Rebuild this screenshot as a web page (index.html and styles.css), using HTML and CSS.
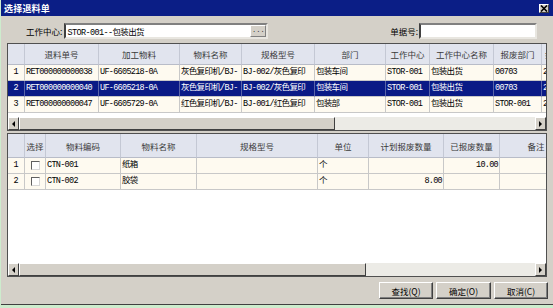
FILE: index.html
```html
<!DOCTYPE html>
<html lang="zh-CN">
<head>
    <meta charset="UTF-8">
    <title>选择退料单</title>
    <link rel="stylesheet" href="styles.css">
</head>
<body>
<div class="window">
    <div class="titlebar">
        <span class="title">选择退料单</span>
        <span class="close-btn">
            <svg width="8" height="7" viewBox="0 0 8 7"><path d="M1 0.5 L7 6.5 M7 0.5 L1 6.5" stroke="#000" stroke-width="1.6"/></svg>
        </span>
    </div>

    <div class="search">
        <label class="lbl">工作中心:</label>
        <div class="field field-wc">
            <span class="field-text">STOR-001--包装出货</span>
            <span class="dots">...</span>
        </div>
        <label class="lbl lbl-no">单据号:</label>
        <div class="field field-no"></div>
    </div>

    <!-- 退料单列表 -->
    <div class="grid grid-top">
        <div class="grid-body">
            <table class="data data-top">
                <thead>
                    <tr>
                        <th class="w-no"></th>
                        <th class="w-73">退料单号</th>
                        <th class="w-80">加工物料</th>
                        <th class="w-61">物料名称</th>
                        <th class="w-72">规格型号</th>
                        <th class="w-70">部门</th>
                        <th class="w-43">工作中心</th>
                        <th class="w-63">工作中心名称</th>
                        <th class="w-47">报废部门</th>
                        <th class="w-30 left">报</th>
                    </tr>
                </thead>
                <tbody>
                    <tr>
                        <td class="no">1</td>
                        <td>RET000000000038</td>
                        <td>UF-6605218-0A</td>
                        <td>灰色复印机/BJ-</td>
                        <td>BJ-002/灰色复印</td>
                        <td>包装车间</td>
                        <td>STOR-001</td>
                        <td>包装出货</td>
                        <td>00703</td>
                        <td>2</td>
                    </tr>
                    <tr class="selected">
                        <td class="no">2</td>
                        <td>RET000000000040</td>
                        <td>UF-6605218-0A</td>
                        <td>灰色复印机/BJ-</td>
                        <td>BJ-002/灰色复印</td>
                        <td>包装车间</td>
                        <td>STOR-001</td>
                        <td>包装出货</td>
                        <td>00703</td>
                        <td>2</td>
                    </tr>
                    <tr>
                        <td class="no">3</td>
                        <td>RET000000000047</td>
                        <td>UF-6605729-0A</td>
                        <td>红色复印机/BJ-</td>
                        <td>BJ-001/红色复印</td>
                        <td>包装部</td>
                        <td>STOR-001</td>
                        <td>包装出货</td>
                        <td>STOR-001</td>
                        <td>2</td>
                    </tr>
                </tbody>
            </table>
        </div>
        <div class="hscroll">
            <span class="sb-btn"><span class="arrow-left"></span></span>
            <span class="sb-thumb thumb-top"></span>
            <span class="sb-track"></span>
            <span class="sb-btn"><span class="arrow-right"></span></span>
        </div>
    </div>

    <!-- 物料明细 -->
    <div class="grid grid-bottom">
        <div class="grid-body">
            <table class="data data-bottom">
                <thead>
                    <tr>
                        <th class="w-no"></th>
                        <th class="w-20">选择</th>
                        <th class="w-74">物料编码</th>
                        <th class="w-75">物料名称</th>
                        <th class="w-120">规格型号</th>
                        <th class="w-50">单位</th>
                        <th class="w-74">计划报废数量</th>
                        <th class="w-55">已报废数量</th>
                        <th class="w-72">备注</th>
                    </tr>
                </thead>
                <tbody>
                    <tr>
                        <td class="no">1</td>
                        <td class="chk"><span class="checkbox"></span></td>
                        <td>CTN-001</td>
                        <td>纸箱</td>
                        <td></td>
                        <td>个</td>
                        <td class="num"></td>
                        <td class="num">10.00</td>
                        <td></td>
                    </tr>
                    <tr>
                        <td class="no">2</td>
                        <td class="chk"><span class="checkbox"></span></td>
                        <td>CTN-002</td>
                        <td>胶袋</td>
                        <td></td>
                        <td>个</td>
                        <td class="num">8.00</td>
                        <td class="num"></td>
                        <td></td>
                    </tr>
                </tbody>
            </table>
        </div>
        <div class="hscroll">
            <span class="sb-btn"><span class="arrow-left"></span></span>
            <span class="sb-thumb thumb-bottom"></span>
            <span class="sb-track"></span>
            <span class="sb-btn"><span class="arrow-right"></span></span>
        </div>
    </div>

    <div class="actions">
        <button class="btn btn-find">查找(Q)</button>
        <button class="btn btn-ok">确定(O)</button>
        <button class="btn btn-cancel">取消(C)</button>
    </div>
</div>
</body>
</html>
```

FILE: styles.css
```css
body {
    margin: 0;
    background: #cdeccd;
    font-family: "Liberation Mono", "Noto Sans CJK SC", monospace;
    font-size: 9px;
    color: #000;
}
.window {
    width: 552px;
    height: 304px;
    margin-left: 1px;
    background: #d4d0c8;
    border-bottom: 1px solid #404040;
    overflow: hidden;
}

/* title bar */
.titlebar {
    height: 16px;
    background: #0b1e86;
    display: flex;
    align-items: center;
    justify-content: space-between;
    padding: 0 4px 0 3px;
}
.title {
    color: #fff;
    font-family: "Noto Sans CJK SC", sans-serif;
    font-weight: bold;
    font-size: 9px;
    letter-spacing: 0.2px;
}
.close-btn {
    width: 8px;
    height: 7px;
    background: #d4d0c8;
    border: 1px solid;
    border-color: #fff #404040 #404040 #fff;
    display: flex;
    align-items: center;
    justify-content: center;
}

/* search row */
.search {
    display: flex;
    align-items: center;
    height: 16px;
    margin-top: 7px;
    padding-left: 25px;
}
.lbl {
    font-family: "Noto Sans CJK SC", sans-serif;
    font-size: 8.5px;
    margin-right: 2px;
}
.lbl-no {
    margin-left: auto;
    margin-right: 1px;
}
.field {
    height: 12px;
    background: #fff;
    border: 2px solid;
    border-color: #808080 #e8e6e0 #e8e6e0 #404040;
    display: flex;
    align-items: center;
}
.field-wc {
    width: 200px;
}
.field-no {
    width: 114px;
    margin-right: 16px;
}
.field-text {
    flex: 1;
    padding-left: 1px;
    font-size: 8.5px;
    letter-spacing: -0.6px;
}
.dots {
    width: 14px;
    height: 10px;
    background: #d4d0c8;
    border: 1px solid;
    border-color: #fff #808080 #808080 #fff;
    font-size: 7px;
    line-height: 8px;
    text-align: center;
    color: #333;
}

/* grids */
.grid {
    width: 538px;
    margin-left: 6px;
    border: 1px solid #505050;
    background: #fff;
    display: flex;
    flex-direction: column;
}
.grid-top {
    margin-top: 4px;
    height: 86px;
}
.grid-bottom {
    margin-top: 2px;
    height: 142px;
}
.grid-body {
    flex: 1;
    overflow: hidden;
}
.data {
    table-layout: fixed;
    border-collapse: separate;
    border-spacing: 0;
}
.data-top {
    width: 555px;
}
.data-bottom {
    width: 556px;
}
.data th {
    background: #e1e4ee;
    color: #3a3a3a;
    font-family: "Noto Sans CJK SC", sans-serif;
    font-weight: normal;
    font-size: 8.5px;
    border-right: 1px solid #c4c8d4;
    border-bottom: 1px solid #b8bcc8;
    padding: 0;
    white-space: nowrap;
    overflow: hidden;
}
.data th.left {
    text-align: left;
    padding-left: 3px;
}
.data-top th {
    height: 20px;
}
.data-bottom th {
    height: 23px;
}
.data td {
    height: 15px;
    padding: 0 1px;
    background: #fefaf0;
    border-right: 1px solid #c8c8c8;
    border-bottom: 1px solid #c8c8c8;
    white-space: nowrap;
    overflow: hidden;
    font-size: 8.5px;
    letter-spacing: -0.7px;
    line-height: 15px;
}
.data td.no {
    text-align: center;
    letter-spacing: 0;
}
.data td.num {
    text-align: right;
}
.data td.chk {
    padding-left: 6px;
}
.data tr.selected td {
    background: #0a1a86;
    color: #fff;
    border-right-color: #5a64a8;
}
.checkbox {
    display: inline-block;
    width: 7px;
    height: 7px;
    margin-top: 3px;
    vertical-align: top;
    background: #fff;
    border: 1px solid;
    border-color: #606060 #d8d8d8 #d8d8d8 #606060;
}

.w-no { width: 16px; }
.w-20 { width: 20px; }
.w-30 { width: 30px; }
.w-43 { width: 43px; }
.w-47 { width: 47px; }
.w-50 { width: 50px; }
.w-55 { width: 55px; }
.w-61 { width: 61px; }
.w-63 { width: 63px; }
.w-70 { width: 70px; }
.w-72 { width: 72px; }
.w-73 { width: 73px; }
.w-74 { width: 74px; }
.w-75 { width: 75px; }
.w-80 { width: 80px; }
.w-120 { width: 120px; }

/* horizontal scrollbar */
.hscroll {
    height: 13px;
    display: flex;
    background: #ecebe6;
}
.sb-btn {
    width: 9px;
    height: 11px;
    background: #d4d0c8;
    border: 1px solid;
    border-color: #fff #404040 #404040 #fff;
    display: flex;
    align-items: center;
    justify-content: center;
}
.sb-thumb {
    height: 11px;
    background: #d4d0c8;
    border: 1px solid;
    border-color: #fff #404040 #404040 #fff;
}
.thumb-top {
    width: 314px;
}
.thumb-bottom {
    width: 345px;
}
.sb-track {
    flex: 1;
}
.arrow-left {
    width: 0;
    height: 0;
    border-top: 3px solid transparent;
    border-bottom: 3px solid transparent;
    border-right: 3px solid #000;
}
.arrow-right {
    width: 0;
    height: 0;
    border-top: 3px solid transparent;
    border-bottom: 3px solid transparent;
    border-left: 3px solid #000;
}

/* buttons */
.actions {
    display: flex;
    justify-content: flex-end;
    gap: 3px;
    margin-top: 5px;
    padding-right: 5px;
}
.btn {
    height: 17px;
    padding: 0;
    background: #d4d0c8;
    border: 1px solid;
    border-color: #fff #404040 #404040 #fff;
    box-shadow: inset -1px -1px 0 #808080;
    font-family: "Noto Sans CJK SC", sans-serif;
    font-size: 8.5px;
    color: #000;
}
.btn-find { width: 54px; }
.btn-ok { width: 55px; }
.btn-cancel { width: 54px; }
```
